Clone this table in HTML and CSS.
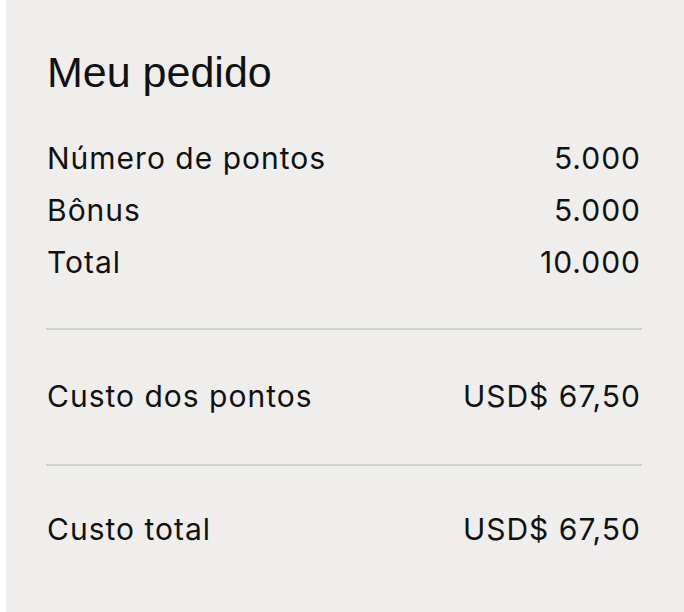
FILE: index.html
```html
<!DOCTYPE html>
<html lang="pt">
<head>
<meta charset="utf-8">
<title>Meu pedido</title>
<link rel="stylesheet" href="styles.css">
</head>
<body>
<section class="panel">
  <h1 class="title">Meu pedido</h1>
  <div class="group group-first">
    <div class="row"><span>Número de pontos</span><span>5.000</span></div>
    <div class="row"><span>Bônus</span><span>5.000</span></div>
    <div class="row"><span>Total</span><span>10.000</span></div>
  </div>
  <hr class="sep sep-1">
  <div class="group group-mid">
    <div class="row"><span>Custo dos pontos</span><span>USD$ 67,50</span></div>
  </div>
  <hr class="sep sep-2">
  <div class="group group-last">
    <div class="row"><span>Custo total</span><span>USD$ 67,50</span></div>
  </div>
</section>
</body>
</html>
```

FILE: styles.css
```css
html, body {
  margin: 0;
  padding: 0;
  background: #ffffff;
}
body {
  width: 684px;
  height: 612px;
  overflow: hidden;
}
.panel {
  margin-left: 6px;
  height: 612px;
  box-sizing: border-box;
  background: #efeeec;
  padding: 51px 42px 0 40px;
  color: #111111;
  display: flex;
  flex-direction: column;
}
.title {
  margin: 0;
  font-family: "Liberation Sans", Arial, sans-serif;
  font-weight: 400;
  font-size: 43px;
  line-height: 43px;
  padding-left: 1px;
}
.group {
  display: flex;
  flex-direction: column;
}
.group-first { margin-top: 38px; }
.group-mid { margin-top: 40px; }
.group-last { margin-top: 37px; }
.row {
  display: flex;
  justify-content: space-between;
  font-family: Inter, "Liberation Sans", sans-serif;
  font-size: 30px;
  letter-spacing: 1px;
  line-height: 52px;
  padding-left: 1px;
  padding-right: 1px;
}
.sep {
  margin: 0;
  border: 0;
  height: 2px;
  background: #cfcfcd;
}
.sep-1 { margin-top: 40px; }
.sep-2 { margin-top: 42px; }
```
